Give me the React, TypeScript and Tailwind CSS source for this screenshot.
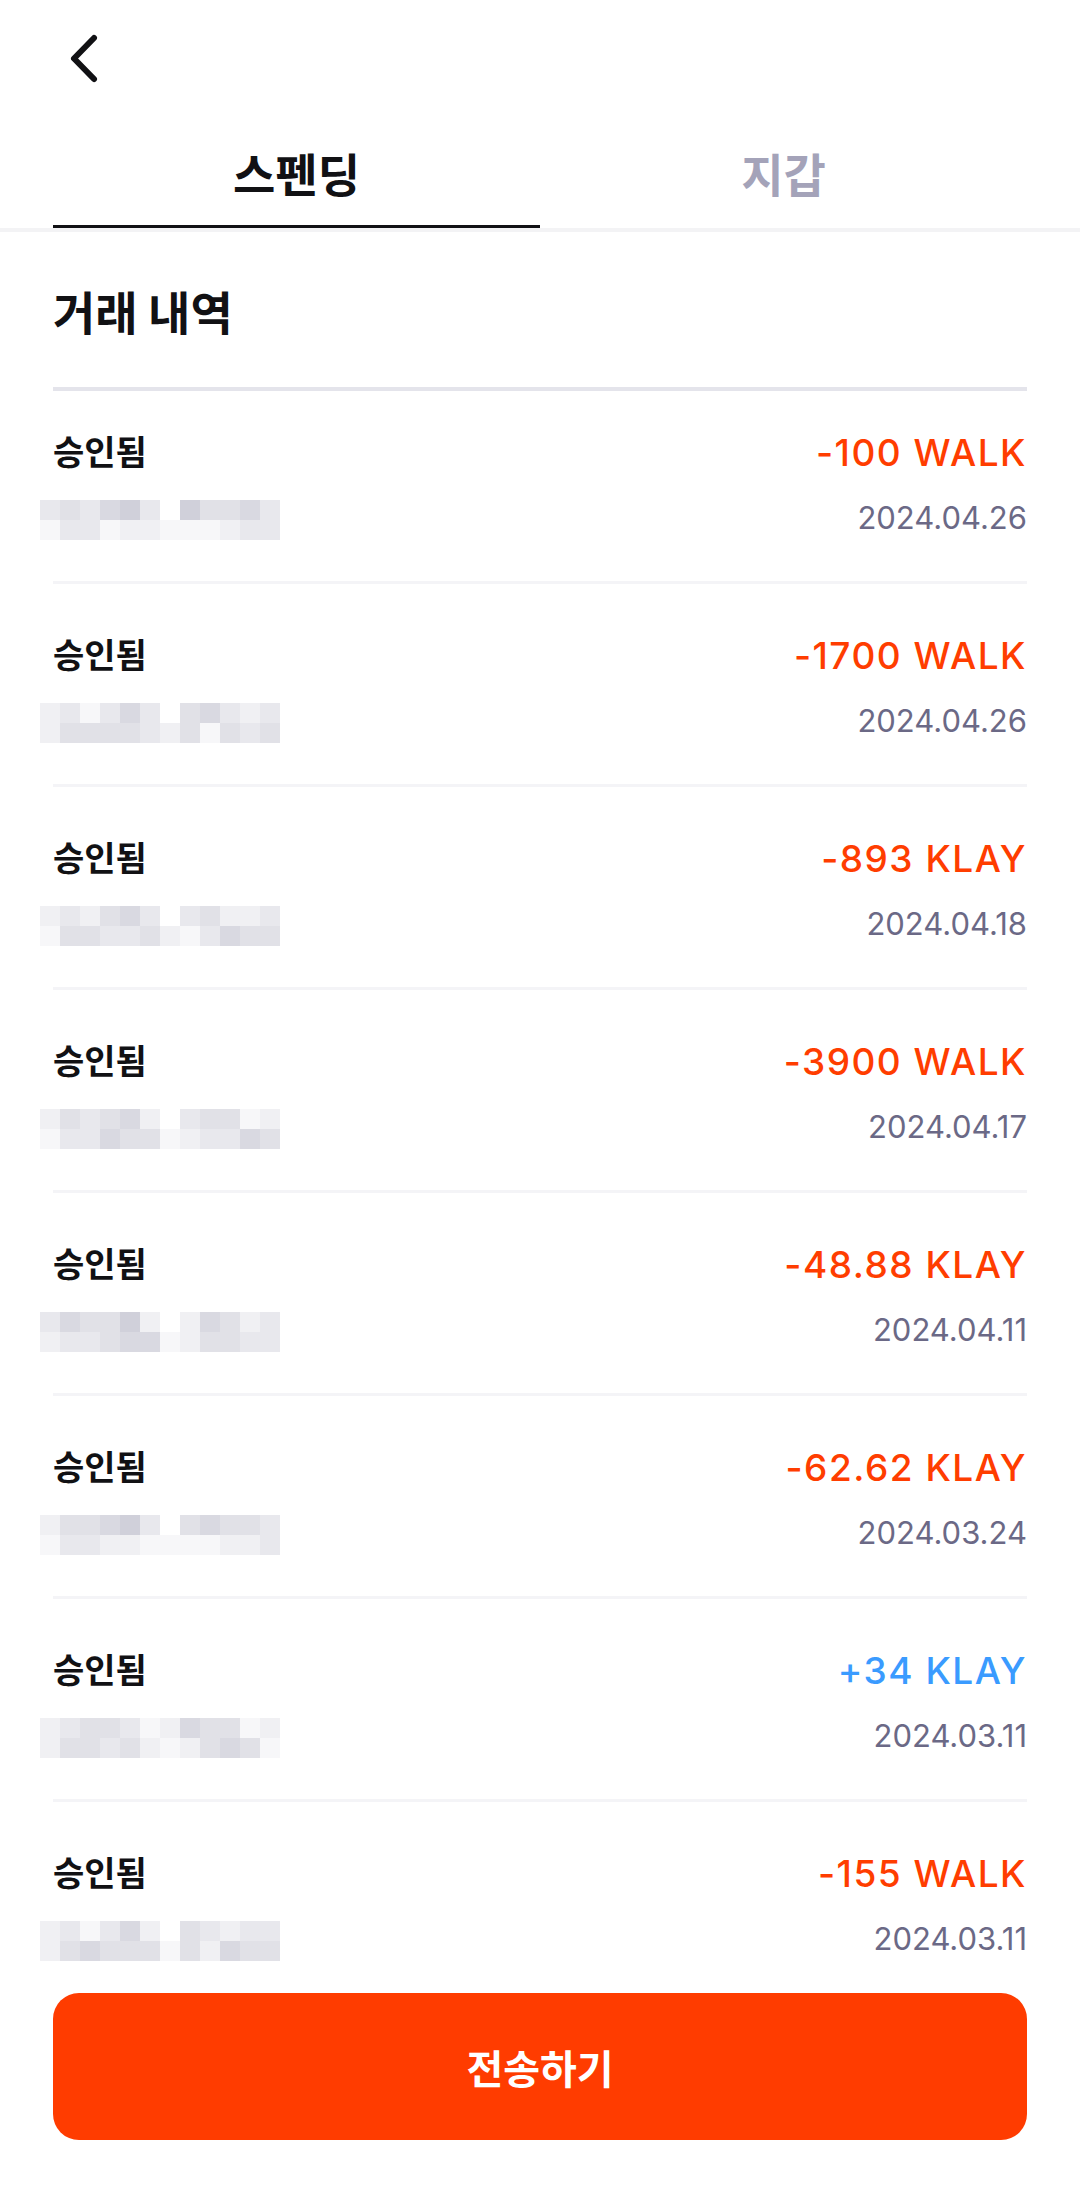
import React from "react";

const PALETTE = [
  "bg-[#ffffff]",
  "bg-[#f7f7f9]",
  "bg-[#f0f0f3]",
  "bg-[#e8e8ed]",
  "bg-[#e1e1e7]",
  "bg-[#d9d9e1]",
  "bg-[#d0d0da]",
];

type Tx = { amount: string; date: string; positive?: boolean; mosaic: [string, string] };

const TXS: Tx[] = [
  { amount: "-100 WALK", date: "2024.04.26", mosaic: ["343563064453", "133122111233"] },
  { amount: "-1700 WALK", date: "2024.04.26", mosaic: ["231353045323", "244443241434"] },
  { amount: "-893 KLAY", date: "2024.04.18", mosaic: ["232453034223", "144334213544"] },
  { amount: "-3900 WALK", date: "2024.04.17", mosaic: ["243452034412", "133544123354"] },
  { amount: "-48.88 KLAY", date: "2024.04.11", mosaic: ["354462025423", "233455124433"] },
  { amount: "-62.62 KLAY", date: "2024.03.24", mosaic: ["244563045443", "133221111223"] },
  { amount: "+34 KLAY", date: "2024.03.11", positive: true, mosaic: ["234431254412", "244342124541"] },
  { amount: "-155 WALK", date: "2024.03.11", mosaic: ["231352043233", "245444142544"] },
];

function Mosaic({ rows }: { rows: [string, string] }) {
  return (
    <div className="-ml-[13px] mt-[31px] flex w-[240px] flex-col">
      {rows.map((r, i) => (
        <div key={i} className="flex h-[20px]">
          {r.split("").map((c, j) => (
            <div key={j} className={`h-[20px] w-[20px] ${PALETTE[Number(c)]}`} />
          ))}
        </div>
      ))}
    </div>
  );
}

function Row({ tx }: { tx: Tx }) {
  return (
    <div className="flex items-start justify-between border-b-[3px] border-[#f4f4f7] pt-[52px] pb-[41px] first:pt-[42px]">
      <div className="flex flex-col">
        <div className="h-[36px] text-[34px] leading-[36px] font-bold text-[#111114] [font-family:'Noto_Sans_CJK_KR',sans-serif]">
          승인됨
        </div>
        <Mosaic rows={tx.mosaic} />
      </div>
      <div className="flex flex-col items-end [font-family:Inter,'Noto_Sans_CJK_KR',sans-serif]">
        <div
          className={`h-[40px] text-[37px] leading-[40px] font-medium tracking-[1.5px] ${
            tx.positive ? "text-[#3a9bff]" : "text-[#ff3d00]"
          }`}
        >
          {tx.amount}
        </div>
        <div className="mt-[27px] h-[36px] text-[31px] leading-[36px] text-[#6b6986]">{tx.date}</div>
      </div>
    </div>
  );
}

export default function App() {
  return (
    <div className="flex h-[2202px] w-[1080px] flex-col overflow-hidden bg-white [font-family:'Noto_Sans_CJK_KR',sans-serif]">
      {/* nav */}
      <div className="flex h-[116px] shrink-0 items-center pl-[64px]">
        <svg width="40" height="60" viewBox="0 0 40 60" fill="none">
          <polyline
            points="30,10 10,30.5 30,51"
            stroke="#111114"
            strokeWidth="6"
            strokeLinecap="round"
            strokeLinejoin="round"
          />
        </svg>
      </div>

      {/* tabs */}
      <div className="flex shrink-0 border-b-4 border-[#f3f3f5] px-[53px]">
        <div className="flex flex-1 flex-col">
          <div className="flex h-[109px] items-center justify-center pt-[2px] text-[46px] leading-[50px] font-bold text-[#111114]">
            스펜딩
          </div>
          <div className="h-[3px] bg-[#111114]" />
        </div>
        <div className="flex flex-1 flex-col">
          <div className="flex h-[109px] items-center justify-center pt-[2px] text-[46px] leading-[50px] font-bold text-[#a4a3b9]">
            지갑
          </div>
          <div className="h-[3px]" />
        </div>
      </div>

      {/* content */}
      <div className="flex min-h-0 flex-1 flex-col overflow-hidden px-[53px]">
        <div className="shrink-0 border-b-4 border-[#e4e4eb] pt-[55px] pb-[54px] text-[46px] leading-[46px] font-bold text-[#111114]">
          거래 내역
        </div>
        <div className="flex flex-col">
          {TXS.map((tx, i) => (
            <Row key={i} tx={tx} />
          ))}
        </div>
      </div>

      {/* bottom button */}
      <div className="flex h-[240px] shrink-0 flex-col px-[53px] pt-[31px]">
        <button className="flex h-[147px] w-full items-center justify-center rounded-[26px] bg-[#ff3c00] text-[40px] font-bold text-white">
          전송하기
        </button>
      </div>
    </div>
  );
}
